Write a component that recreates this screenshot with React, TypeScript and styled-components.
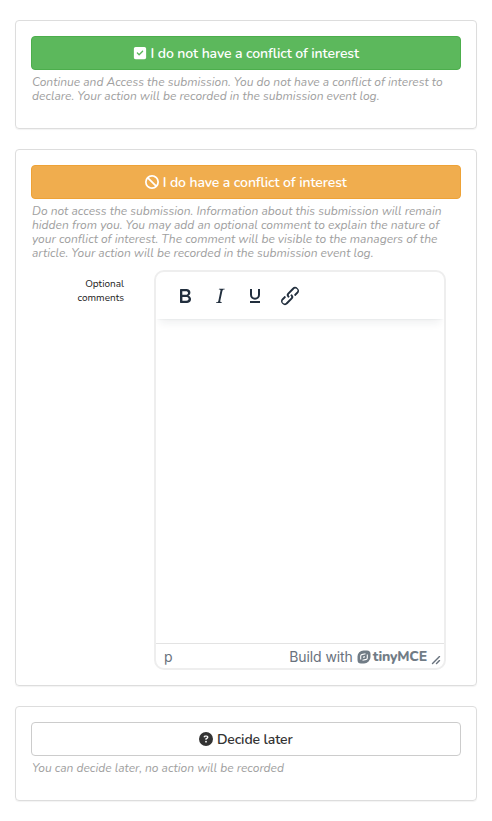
import React from "react";
import styled, { createGlobalStyle } from "styled-components";
import { FaSquareCheck, FaBan, FaCircleQuestion } from "react-icons/fa6";

const GlobalStyle = createGlobalStyle`
  * { box-sizing: border-box; }
  body { margin: 0; background: #fff; font-family: Nunito, Lato, sans-serif; }
`;

const Page = styled.main`
  display: flex;
  flex-direction: column;
  gap: 20px;
  padding: 20px 15px;
`;

const Card = styled.section<{ $height: number }>`
  height: ${(p) => p.$height}px;
  padding: 15px;
  border: 1px solid #ddd;
  border-radius: 4px;
  box-shadow: 0 1px 1px rgba(0, 0, 0, 0.05);
`;

const tones = {
  success: { background: "#5cb85c", border: "#4cae4c", color: "#fff" },
  warning: { background: "#f0ad4e", border: "#eea236", color: "#fff" },
  plain: { background: "#fff", border: "#ccc", color: "#333" },
};

const ActionButton = styled.button<{ $tone: keyof typeof tones }>`
  display: flex;
  align-items: center;
  justify-content: center;
  gap: 3.5px;
  width: 100%;
  height: 34px;
  padding: 0;
  border: 1px solid ${(p) => tones[p.$tone].border};
  border-radius: 4px;
  background: ${(p) => tones[p.$tone].background};
  color: ${(p) => tones[p.$tone].color};
  font: 600 14px/20px Nunito, Lato, sans-serif;
  letter-spacing: -0.11px;
`;

const ButtonText = styled.span`
  padding-top: 2px;
`;

const Help = styled.p`
  margin: 5px 0 0 1px;
  color: #a0a0a0;
  font-size: 12px;
  font-style: italic;
  line-height: 14px;
`;

const CommentRow = styled.div`
  display: grid;
  grid-template-columns: 93px 292px;
  column-gap: 30px;
  margin-top: 10px;
`;

const Label = styled.label`
  padding: 7px 0 0 40px;
  color: #222;
  font-size: 10px;
  line-height: 14px;
  text-align: right;
`;

const Editor = styled.div`
  display: flex;
  flex-direction: column;
  height: 400px;
  border: 2px solid #eee;
  border-radius: 10px;
  overflow: hidden;
`;

const Toolbar = styled.div`
  display: flex;
  align-items: center;
  gap: 11px;
  height: 47px;
  padding: 1px 0 0 17px;
  box-shadow: 0 2px 2px -2px rgba(34, 47, 62, 0.1), 0 8px 8px -4px rgba(34, 47, 62, 0.07);
`;

const ToolButton = styled.button`
  display: flex;
  padding: 0;
  border: 0;
  background: none;
  color: #222f3e;
`;

const EditArea = styled.div`
  flex: 1;
`;

const StatusBar = styled.div`
  display: flex;
  align-items: center;
  justify-content: space-between;
  height: 25px;
  padding: 2px 3px 0 8px;
  border-top: 1px solid #e3e3e3;
  color: #69727d;
  font: 14px/20px Inter, sans-serif;
`;

const Branding = styled.div`
  display: flex;
  align-items: center;
`;

const BuildWith = styled.span`
  letter-spacing: -0.1px;
`;

const BrandName = styled.span`
  margin-left: 2px;
  color: #717c86;
  font: 800 14px/18px Nunito, Inter, sans-serif;
  letter-spacing: -0.2px;
`;

const BrandMark = styled.svg`
  margin-left: 4px;
`;

const ResizeHandle = styled.svg`
  margin: 6px 0 0 4px;
`;

const toolIcons = [
  {
    label: "Bold",
    d: "M7.8 19c-.3 0-.5 0-.6-.2l-.2-.5V5.7c0-.2 0-.4.2-.5l.6-.2h5c1.5 0 2.7.3 3.5 1 .7.6 1.1 1.4 1.1 2.5a3 3 0 0 1-.6 1.9c-.4.6-1 1-1.6 1.2.4.1.9.3 1.3.6s.8.7 1 1.2c.4.4.5 1 .5 1.6 0 1.3-.4 2.3-1.3 3-.8.7-2.1 1-3.8 1H7.8Zm5-8.3c.6 0 1.2-.1 1.6-.5.4-.3.6-.7.6-1.3 0-1.1-.8-1.7-2.3-1.7H9.3v3.5h3.4Zm.5 6c.7 0 1.3-.1 1.7-.4.4-.4.6-.9.6-1.5s-.2-1-.7-1.4c-.4-.3-1-.4-2-.4H9.4v3.8h4Z",
  },
  {
    label: "Italic",
    d: "m16.7 4.7-.1.9h-.3c-.6 0-1 0-1.4.3-.3.3-.4.6-.5 1.1l-2.1 9.8v.6c0 .5.4.8 1.4.8h.2l-.2.8H8l.2-.8h.2c1.1 0 1.8-.5 2-1.5l2-9.8.1-.5c0-.6-.4-.8-1.4-.8h-.3l.2-.9h5.8Z",
  },
  {
    label: "Underline",
    d: "M15 5h2v5.8a5 5 0 0 1-10 0V5h2v5.8a3 3 0 0 0 6 0V5ZM7 17h10v2H7Z",
  },
  {
    label: "Link",
    d: "M6.2 12.3a1 1 0 0 1 1.4 1.4l-2 2a2 2 0 1 0 2.6 2.8l4.8-4.8a1 1 0 0 0 0-1.4 1 1 0 1 1 1.4-1.3 2.9 2.9 0 0 1 0 4L9.6 20a3.9 3.9 0 0 1-5.5-5.5l2-2Zm11.6-.6a1 1 0 0 1-1.4-1.4l2-2a2 2 0 1 0-2.6-2.8L11 10.3a1 1 0 0 0 0 1.4A1 1 0 1 1 9.6 13a2.9 2.9 0 0 1 0-4L14.4 4a3.9 3.9 0 0 1 5.5 5.5l-2 2Z",
  },
];

export default function App() {
  return (
    <>
      <GlobalStyle />
      <Page>
        <Card $height={109}>
          <ActionButton $tone="success">
            <FaSquareCheck size={14} />
            <ButtonText>I do not have a conflict of interest</ButtonText>
          </ActionButton>
          <Help>
            Continue and Access the submission. You do not have a conflict of interest to declare.
            Your action will be recorded in the submission event log.
          </Help>
        </Card>

        <Card $height={537}>
          <ActionButton $tone="warning">
            <FaBan size={14} />
            <ButtonText>I do have a conflict of interest</ButtonText>
          </ActionButton>
          <Help>
            Do not access the submission. Information about this submission will remain hidden from
            you. You may add an optional comment to explain the nature of your conflict of interest.
            The comment will be visible to the managers of the article. Your action will be recorded
            in the submission event log.
          </Help>
          <CommentRow>
            <Label>Optional comments</Label>
            <Editor>
              <Toolbar>
                {toolIcons.map((icon) => (
                  <ToolButton key={icon.label} aria-label={icon.label}>
                    <svg width="24" height="24" viewBox="0 0 24 24" fill="currentColor" fillRule="evenodd">
                      <path d={icon.d} />
                    </svg>
                  </ToolButton>
                ))}
              </Toolbar>
              <EditArea />
              <StatusBar>
                <span>p</span>
                <Branding>
                  <BuildWith>Build with</BuildWith>
                  <BrandMark width="14" height="14" viewBox="0 0 14 14" fill="none">
                    <path
                      d="M6.5.5H10A3.5 3.5 0 0 1 13.5 4v3A6.500 6.500 0 0 1 7 13.500H4A3.500 3.500 0 0 1 .5 10V6.500a6 6 0 0 1 6-6Z"
                      fill="#717c86"
                    />
                    <path
                      d="M3.700 9.500V6Q3.700 4.900 4.800 4.600L8.500 3.700M10.300 4.500V8Q10.300 9.100 9.200 9.400L5.500 10.300"
                      stroke="#fff"
                      strokeWidth="1.100"
                    />
                    <path d="M6.200 6.500 7.800 6.100V7.500L6.200 7.900Z" fill="#fff" />
                  </BrandMark>
                  <BrandName>tinyMCE</BrandName>
                  <ResizeHandle width="10" height="10" viewBox="0 0 10 10" fill="currentColor">
                    <path d="M8.1 1.1A.5.5 0 1 1 9 2l-7 7A.5.5 0 1 1 1 8l7-7ZM8.1 5.1A.5.5 0 1 1 9 6l-3 3A.5.5 0 1 1 5 8l3-3Z" />
                  </ResizeHandle>
                </Branding>
              </StatusBar>
            </Editor>
          </CommentRow>
        </Card>

        <Card $height={95}>
          <ActionButton $tone="plain">
            <FaCircleQuestion size={14} />
            <ButtonText>Decide later</ButtonText>
          </ActionButton>
          <Help>You can decide later, no action will be recorded</Help>
        </Card>
      </Page>
    </>
  );
}
